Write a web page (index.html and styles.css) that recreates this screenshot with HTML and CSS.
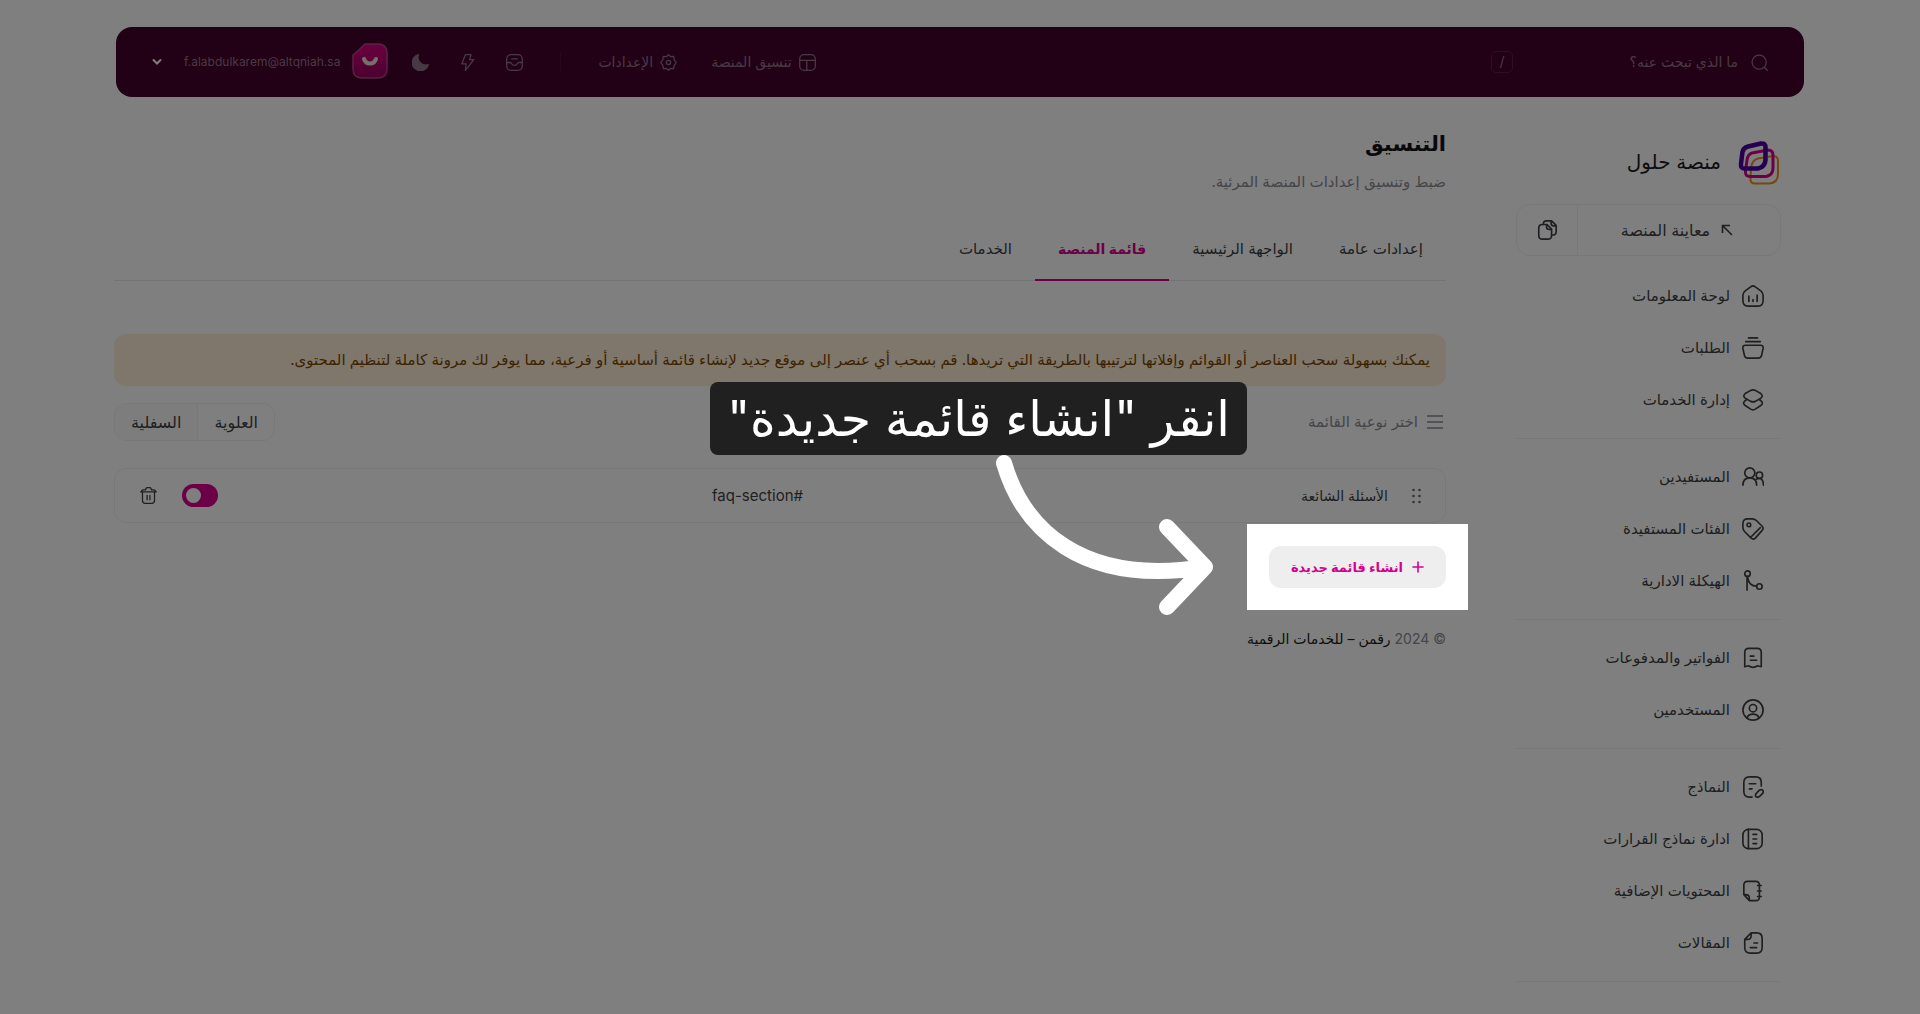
FILE: index.html
```html
<!DOCTYPE html>
<html lang="ar" dir="rtl">
<head>
    <meta charset="UTF-8">
    <meta name="viewport" content="width=device-width, initial-scale=1.0">
    <title>منصة حلول</title>
    <link rel="stylesheet" href="styles.css">
</head>
<body>
    <header class="topbar">
        <div class="search">
            <svg class="icon icon-sm" viewBox="0 0 24 24"><circle cx="11.5" cy="11.5" r="10"/><path d="M19 19l4 4"/></svg>
            <input type="search" class="search-input" aria-label="بحث" placeholder="ما الذي تبحث عنه؟">
            <kbd class="search-key">/</kbd>
        </div>
        <div class="topbar-menu">
            <nav class="topbar-links">
                <a href="#">
                    <svg class="icon icon-sm" viewBox="0 0 24 24"><rect x="1" y="1" width="22" height="22" rx="6"/><path d="M1 9h22M11 9v14"/></svg>
                    تنسيق المنصة
                </a>
                <a href="#">
                    <svg class="icon icon-sm" viewBox="0 0 24 24"><path d="M12 1l3 2.700 4.300-.2.700 4.300L23 12l-3 4.200-.7 4.300-4.300-.2L12 23l-3-2.700-4.300.2-.7-4.300L1 12l3-4.200.7-4.300 4.300.2z"/><circle cx="12" cy="12" r="3"/></svg>
                    الإعدادات
                </a>
            </nav>
            <span class="topbar-divider"></span>
            <div class="topbar-actions">
                <button type="button" class="icon-btn" aria-label="الوارد">
                    <svg class="icon icon-sm" viewBox="0 0 24 24"><rect x="1" y="1" width="22" height="22" rx="6"/><path d="M1 12h5c2 0 2 4 6 4s4-4 6-4h5M8 7h8"/></svg>
                </button>
                <button type="button" class="icon-btn" aria-label="إجراءات سريعة">
                    <svg class="icon icon-sm" viewBox="0 0 24 24"><path d="M9 1h8l-2 7h6L9 23l1-9H4z"/></svg>
                </button>
                <button type="button" class="icon-btn" aria-label="الوضع الليلي">
                    <svg class="icon icon-sm moon" viewBox="0 0 24 24"><path d="M9 1a11.500 11.500 0 1 0 14 14A11 11 0 0 1 9 1z"/></svg>
                </button>
            </div>
            <button type="button" class="account">
                <svg class="avatar" viewBox="0 0 36 38">
                    <defs>
                        <linearGradient id="avatarFill" x1="0" y1="0" x2="0" y2="1">
                            <stop offset="0" stop-color="#d6007f"/>
                            <stop offset="1" stop-color="#960060"/>
                        </linearGradient>
                    </defs>
                    <path class="avatar-shadow" d="M12 3h14q9 0 9 9v16q0 9-9 9H10q-9 0-9-9V15z"/>
                    <path class="avatar-body" d="M13 1h13q9 0 9 9v16q0 9-9 9H10q-9 0-9-9V12Q4 10 13 1z"/>
                    <path class="avatar-smile" d="M12 16c2 6 10 6 12 0"/>
                </svg>
                <span class="account-mail" dir="ltr">f.alabdulkarem@altqniah.sa</span>
                <svg class="chevron" viewBox="0 0 10 10"><path d="M1.500 3L5 6.500 8.500 3"/></svg>
            </button>
        </div>
    </header>

    <div class="layout">
        <aside class="sidebar">
            <div class="brand">
                <svg class="brand-logo" viewBox="1 -1 42 44">
                    <path class="logo-back" d="M20 17.500L35 15q5 0 5 5v13q0 9-9 9.500H17q-5 0-4.500-5L13 27q1-8 7-9.500z"/>
                    <path class="logo-mid" d="M14 12l16-3q5 0 5 5v13q0 7-7 8.500H12q-5 0-4.500-5L9 19q1-6 5-7z"/>
                    <path class="logo-front" d="M10 5.500l13-3q4.500-.5 4.500 4V19q-.5 7-7.500 8.500H7Q2.500 28 3 23l1.500-12Q5.500 6.500 10 5.500z"/>
                </svg>
                <span class="brand-name">منصة حلول</span>
            </div>

            <div class="preview">
                <a href="#" class="preview-link">
                    <svg class="preview-arrow" viewBox="0 0 12 12"><path d="M1.500 9V1.500H9M2 2l9 9"/></svg>
                    معاينة المنصة
                </a>
                <button type="button" class="preview-copy" aria-label="نسخ الرابط">
                    <svg class="icon" viewBox="0 0 24 24"><path d="M8 6V5.500q0-3.500 3.500-3.500H17l5 5v6.500q0 4-4 4h-1M16.500 2v3q0 2.500 2.500 2.500h3"/><path d="M12 6H7Q3 6 3 10v8q0 4 4 4h6q4 0 4-4v-7zM11.500 6v2.500q0 3 3 3H17"/></svg>
                </button>
            </div>

            <nav class="nav">
                <a href="#"><svg class="icon" viewBox="0 0 24 24"><path d="M9.500 2Q12 0 14.500 2l6 4.500Q23 8.500 23 11v6q0 6-5.500 6h-11Q1 23 1 17v-6q0-2.500 2.500-4.500zM7.500 12v6M12 16v2M16.500 11v7"/></svg>لوحة المعلومات</a>
                <a href="#"><svg class="icon" viewBox="0 0 24 24"><path d="M7 1h10M4 5h16M4 9h16q3.500 0 3 3.500l-1.500 7Q21 23 17.500 23h-11Q3 23 2.500 19.500L1 12.500Q.5 9 4 9z"/></svg>الطلبات</a>
                <a href="#"><svg class="icon" viewBox="0 0 24 24"><path d="M9.500 1.500q2.500-1 5 0l6 3.500q3 2.500 0 5l-6 3.500q-2.500 1-5 0L3.500 10q-3-2.500 0-5z"/><path d="M4.500 12l-1 .8q-3.500 3 0 5.200l6 4q2.500 1.500 5 0l6-4q3.500-2.200 0-5.200l-1-.8"/></svg>إدارة الخدمات</a>
                <hr>
                <a href="#"><svg class="icon" viewBox="0 0 24 24"><circle cx="8.500" cy="7.500" r="5.500"/><path d="M1 21q0-8 7.500-8t7.500 8"/><circle cx="19" cy="10" r="3.500"/><path d="M15.500 14.500q7.500-3.500 8 6.500"/></svg>المستفيدين</a>
                <a href="#"><svg class="icon" viewBox="0 0 24 24"><path d="M1 6q0-5 5-5h5q3 0 5 2l6 6q2 2 0 4.500L14.500 22q-2 2-4.500 0l-7-7q-2-2-2-4.500zM20 10.500L9.500 21"/><circle cx="7.500" cy="7.500" r="2"/></svg>الفئات المستفيدة</a>
                <a href="#"><svg class="icon" viewBox="0 0 24 24"><circle cx="6" cy="4" r="3"/><circle cx="19" cy="18" r="3"/><path d="M5.500 7v15M6 7q1 11 10 10.500"/></svg>الهيكلة الادارية</a>
                <hr>
                <a href="#"><svg class="icon" viewBox="0 0 24 24"><path d="M3 6q0-4.500 4.500-4.500h9Q21 1.500 21 6v15.500l-4-1q-5 3.500-10 0l-4 1zM9 10h4M9 14.500h7"/></svg>الفواتير والمدفوعات</a>
                <a href="#"><svg class="icon" viewBox="0 0 24 24"><circle cx="12" cy="12" r="11"/><circle cx="12" cy="10" r="4"/><path d="M5.500 20.500q1.500-4 6.500-4t6.500 4"/></svg>المستخدمين</a>
                <hr>
                <a href="#"><svg class="icon" viewBox="0 0 24 24"><path d="M11 23H8q-6 0-6-6V7q0-6 6-6h7q6 0 6 6v4M8 8.500h7M8 14h3"/><path d="M15 22.500q-1-2 1-4l3-3q2-1.500 3.500 0t0 3.500l-3 3q-2 2-4.500.5z"/></svg>النماذج</a>
                <a href="#"><svg class="icon" viewBox="0 0 24 24"><rect x="1" y="1.500" width="21" height="21" rx="6"/><path d="M7 1.500v21M12 7h4M12 12h4M12 17h4"/></svg>ادارة نماذج القرارات</a>
                <a href="#"><svg class="icon" viewBox="0 0 24 24"><path d="M8 22.500h7q4 0 4-4V5.500q0-4-4-4H6q-4 0-4 4V16zM2 16h2q4 0 4 4v2.500M17 6h4M17 12h4M17 18h4"/></svg>المحتويات الإضافية</a>
                <a href="#"><svg class="icon" viewBox="0 0 24 24"><path d="M10 1h6q6 0 6 6v10q0 6-6 6H9q-6 0-6-6V8zM3 8h3q4 0 4-4V1M13 12h4M9 17h7"/></svg>المقالات</a>
                <hr>
            </nav>
        </aside>

        <main class="content">
            <h1>التنسيق</h1>
            <p class="subtitle">ضبط وتنسيق إعدادات المنصة المرئية.</p>

            <nav class="tabs">
                <a href="#">إعدادات عامة</a>
                <a href="#">الواجهة الرئيسية</a>
                <a href="#" class="active">قائمة المنصة</a>
                <a href="#">الخدمات</a>
            </nav>

            <div class="alert">يمكنك بسهولة سحب العناصر أو القوائم وإفلاتها لترتيبها بالطريقة التي تريدها. قم بسحب أي عنصر إلى موقع جديد لإنشاء قائمة أساسية أو فرعية، مما يوفر لك مرونة كاملة لتنظيم المحتوى.</div>

            <div class="toolbar">
                <div class="toolbar-label">
                    <svg class="lines" viewBox="0 0 16 14"><path d="M0 1h16M0 7h16M0 13h16"/></svg>
                    اختر نوعية القائمة
                </div>
                <div class="segment">
                    <button type="button" class="selected">العلوية</button>
                    <button type="button">السفلية</button>
                </div>
            </div>

            <div class="menu-item">
                <svg class="handle" viewBox="0 0 9 16"><circle cx="1.500" cy="2" r="1.300"/><circle cx="7.500" cy="2" r="1.300"/><circle cx="1.500" cy="8" r="1.300"/><circle cx="7.500" cy="8" r="1.300"/><circle cx="1.500" cy="14" r="1.300"/><circle cx="7.500" cy="14" r="1.300"/></svg>
                <span class="item-title">الأسئلة الشائعة</span>
                <span class="item-slug">#faq-section</span>
                <input type="checkbox" class="switch" aria-label="تفعيل" checked>
                <button type="button" class="icon-btn delete" aria-label="حذف">
                    <svg class="icon icon-sm" viewBox="0 0 24 24"><path d="M1 7h22M2 7q0-3 3-3h3q0-3 2.500-3h3Q16 1 16 4h3q3 0 3 3M3.500 7v12q0 4 4 4h9q4 0 4-4V7M10 12v6M14 12v6"/></svg>
                </button>
            </div>

            <div class="spotlight">
                <button type="button" class="create-btn">
                    <svg class="plus" viewBox="0 0 12 12"><path d="M6 1v10M1 6h10"/></svg>
                    انشاء قائمة جديدة
                </button>
                <!-- walkthrough hint -->
                <div class="hint" role="tooltip">انقر "انشاء قائمة جديدة"</div>
                <svg class="hint-arrow" viewBox="0 0 230 170"><path d="M13 13C32 78 90 137 214 117M176 77l38 40-38 40"/></svg>
            </div>

            <footer>&copy; 2024 <a href="#">رقمن – للخدمات الرقمية</a></footer>
        </main>
    </div>
</body>
</html>
```
FILE: styles.css
```css
* {
    box-sizing: border-box;
}

body {
    min-height: 100vh;
    margin: 0;
    padding-top: 27px;
    background: #fff;
    color: #3e3e44;
    font-family: Inter, "DejaVu Sans", sans-serif;
    font-size: 15px;
    line-height: 24px;
}

a {
    color: inherit;
    text-decoration: none;
}

button,
input {
    font: inherit;
    color: inherit;
}

button {
    padding: 0;
    border: none;
    background: none;
    cursor: pointer;
}

svg {
    display: block;
    flex-shrink: 0;
}

.icon {
    width: 22px;
    height: 22px;
    fill: none;
    stroke: currentColor;
    stroke-width: 1.8;
    stroke-linecap: round;
    stroke-linejoin: round;
}

.icon-sm {
    width: 17px;
    height: 17px;
}

/* Top bar */
.topbar {
    display: flex;
    align-items: center;
    justify-content: space-between;
    min-height: 70px;
    margin: 0 116px;
    padding: 0 36px;
    border-radius: 16px;
    background: #44002a;
    color: #93738a;
    font-size: 14px;
}

.search {
    display: flex;
    align-items: center;
    gap: 13px;
    width: 277px;
}

.search-input {
    flex: 1;
    min-width: 0;
    padding: 0;
    border: none;
    outline: none;
    background: none;
}

.search-input::placeholder {
    color: #93738a;
    opacity: 1;
}

.search-key {
    width: 22px;
    height: 22px;
    border: 1px solid #5c1c43;
    border-radius: 5px;
    font-family: inherit;
    line-height: 20px;
    text-align: center;
}

.topbar-menu {
    display: flex;
    align-items: center;
}

.topbar-links {
    display: flex;
    gap: 34px;
}

.topbar-links a {
    display: flex;
    align-items: center;
    gap: 7px;
}

.topbar-divider {
    width: 1px;
    height: 18px;
    margin-inline: 37px;
    background: #52103a;
}

.topbar-actions {
    display: flex;
    gap: 30px;
}

.moon {
    fill: currentColor;
}

.account {
    display: flex;
    align-items: center;
    gap: 12px;
    margin-inline-start: 24px;
}

.avatar {
    width: 36px;
    height: 38px;
}

.avatar-shadow {
    fill: #1c0012;
}

.avatar-body {
    fill: url(#avatarFill);
    stroke: #b8408c;
    stroke-width: 1.5;
}

.avatar-smile {
    fill: none;
    stroke: #ece0d8;
    stroke-width: 4;
    stroke-linecap: round;
}

.account-mail {
    font-size: 12px;
}

.chevron {
    width: 10px;
    height: 10px;
    margin-inline-start: 10px;
    fill: none;
    stroke: #fff;
    stroke-width: 2;
    stroke-linecap: round;
}

/* Page */
.layout {
    display: flex;
    gap: 70px;
    padding: 0 139px 0 114px;
}

.sidebar {
    width: 265px;
    padding-top: 43px;
}

.brand {
    display: flex;
    align-items: center;
    gap: 18px;
    height: 44px;
    color: #1c1c20;
}

.brand-logo {
    width: 42px;
    height: 44px;
    overflow: visible;
    fill: none;
}

.logo-back {
    stroke: #e8921e;
    stroke-width: 2;
}

.logo-mid {
    stroke: #d6008f;
    stroke-width: 3;
}

.logo-front {
    stroke: #4b00a0;
    stroke-width: 4.5;
}

.brand-name {
    font-size: 20px;
}

.preview {
    display: flex;
    margin: 20px 0 14px;
    height: 52px;
    border: 1px solid #f0f0f2;
    border-radius: 14px;
}

.preview-link {
    flex: 1;
    display: flex;
    align-items: center;
    justify-content: center;
    gap: 11px;
    padding-inline-start: 4px;
    font-size: 16px;
}

.preview-arrow {
    width: 12px;
    height: 12px;
    fill: none;
    stroke: currentColor;
    stroke-width: 1.6;
}

.preview-copy {
    width: 61px;
    border-inline-start: 1px solid #f0f0f2;
}

.preview-copy .icon {
    margin: 0 auto;
}

.nav a {
    display: flex;
    align-items: center;
    gap: 12px;
    height: 52px;
    padding: 0 17px;
}

.nav hr {
    height: 1px;
    margin: 12px 0;
    border: none;
    background: #f0f0f2;
}

.content {
    flex: 1;
    min-width: 0;
    padding-top: 29px;
}

h1 {
    margin: 0;
    color: #121214;
    font-size: 21px;
    line-height: 36px;
}

.subtitle {
    margin: 8px 0 23px;
    color: #8a8a94;
}

.tabs {
    display: flex;
    box-shadow: inset 0 -1px #e6e6ea;
}

.tabs a {
    padding: 20px 23px 18px;
    border-bottom: 2px solid transparent;
}

.tabs .active {
    border-color: #d6008f;
    color: #d6008f;
    font-size: 14px;
    font-weight: bold;
}

.alert {
    margin-top: 53px;
    padding: 14px 16px;
    border-radius: 12px;
    background: #ffeed6;
    color: #7a4600;
}

.toolbar {
    display: flex;
    align-items: center;
    justify-content: space-between;
    margin-top: 17px;
}

.toolbar-label {
    display: flex;
    align-items: center;
    gap: 9px;
    padding-inline-start: 3px;
    color: #8a8a94;
}

.lines {
    width: 16px;
    height: 14px;
    stroke: currentColor;
    stroke-width: 1.4;
}

.segment {
    display: flex;
    height: 38px;
    overflow: hidden;
    border: 1px solid #f0f0f2;
    border-radius: 12px;
    font-size: 16px;
}

.segment button {
    padding: 0 16px;
    background: #fafafa;
}

.segment .selected {
    border-inline-end: 1px solid #f0f0f2;
    background: #fff;
}

.menu-item {
    display: flex;
    align-items: center;
    margin-top: 27px;
    height: 55px;
    padding: 0 24px 0 25px;
    border: 1px solid #f0f0f2;
    border-radius: 12px;
}

.handle {
    width: 9px;
    height: 16px;
    margin-inline-end: 24px;
    fill: #6a6a72;
}

.item-title,
.item-slug {
    flex: 1;
}

.item-title {
    font-size: 14px;
}

.switch {
    appearance: none;
    width: 36px;
    height: 23px;
    margin: 0;
    padding: 4px;
    border-radius: 12px;
    background: #ccc;
    cursor: pointer;
}

.switch::before {
    content: "";
    display: block;
    width: 15px;
    height: 15px;
    border-radius: 50%;
    background: #fff;
}

.switch:checked {
    background: #d6008f;
}

.switch:checked::before {
    margin-inline-start: auto;
}

.delete {
    margin-inline-start: 25px;
}

/* Highlighted button, everything around it is dimmed */
.spotlight {
    position: relative;
    width: fit-content;
    margin-top: 23px;
}

.spotlight::before {
    content: "";
    position: absolute;
    inset: -22px;
    box-shadow: 0 0 0 9999px rgba(0, 0, 0, 0.5);
    pointer-events: none;
}

.create-btn {
    display: flex;
    align-items: center;
    gap: 9px;
    height: 42px;
    padding: 0 22px;
    border-radius: 12px;
    background: #eee;
    color: #d6008f;
    font-size: 13px;
    font-weight: bold;
}

.plus {
    width: 12px;
    height: 12px;
    stroke: currentColor;
    stroke-width: 1.6;
    stroke-linecap: round;
}

.hint {
    position: absolute;
    right: calc(100% + 22px);
    bottom: 133px;
    padding: 0 17px;
    border-radius: 8px;
    background: #202020;
    color: #fff;
    font-size: 49px;
    line-height: 73px;
    white-space: nowrap;
}

.hint-arrow {
    position: absolute;
    right: calc(100% + 48px);
    top: -96px;
    width: 230px;
    height: 170px;
    fill: none;
    stroke: #fff;
    stroke-width: 16;
    stroke-linecap: round;
    stroke-linejoin: round;
}

footer {
    margin-top: 39px;
    color: #8a8a94;
    font-size: 14px;
}

footer a {
    color: #1c1c20;
}
```
